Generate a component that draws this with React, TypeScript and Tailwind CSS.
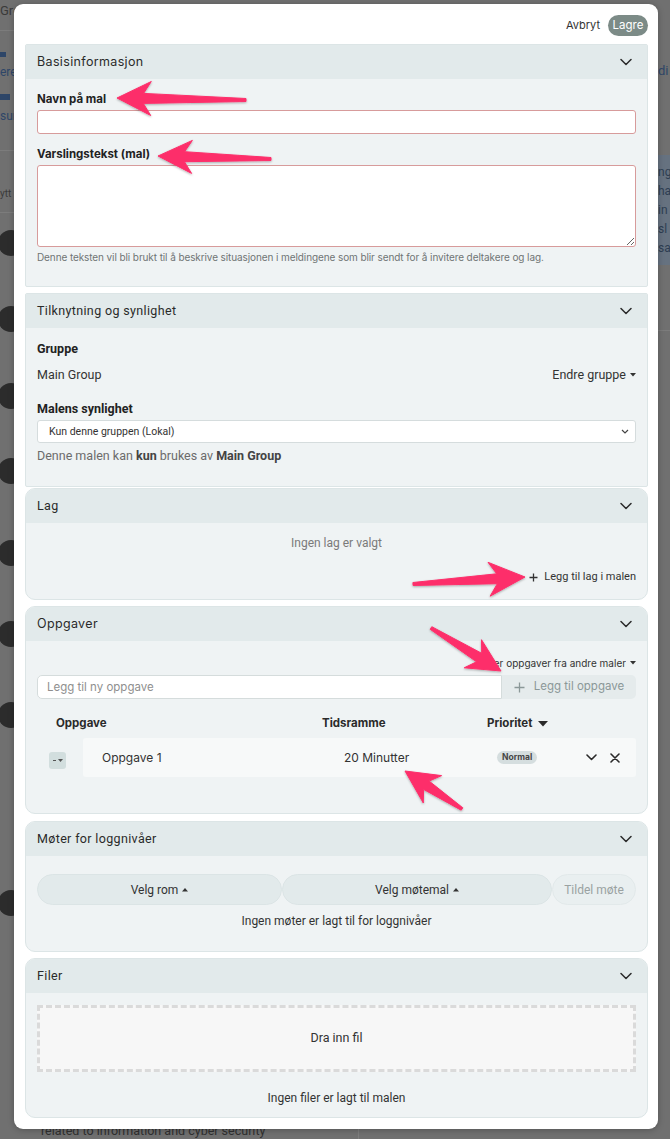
import React from "react";

const INTER = "font-['Inter',sans-serif]";
const ROBOTO = "font-['Roboto',sans-serif]";

function Chevron({ className = "" }: { className?: string }) {
  return (
    <svg width="12" height="8" viewBox="0 0 12 8" className={className}>
      <path d="M1 1.5 L6 6.5 L11 1.5" fill="none" stroke="#2b2b2b" strokeWidth="1.5" strokeLinecap="round" strokeLinejoin="round" />
    </svg>
  );
}

function CaretDown({ className = "" }: { className?: string }) {
  return (
    <svg width="6" height="4" viewBox="0 0 6 4" className={className}>
      <path d="M0 0 L6 0 L3 3.5 Z" fill="#333" />
    </svg>
  );
}

function CaretUp({ className = "" }: { className?: string }) {
  return (
    <svg width="6" height="4" viewBox="0 0 6 4" className={className}>
      <path d="M0 3.5 L6 3.5 L3 0 Z" fill="#333" />
    </svg>
  );
}

function Section({
  title,
  titleFont,
  rounded,
  className = "",
  children,
}: {
  title: string;
  titleFont: string;
  rounded: boolean;
  className?: string;
  children: React.ReactNode;
}) {
  return (
    <div
      className={`border border-[#dce5e6] bg-[#eff3f4] overflow-hidden ${rounded ? "rounded-[10px]" : "rounded-[2px]"} ${className}`}
    >
      <div className="h-[34px] bg-[#e2eaeb] flex items-center justify-between pl-[11px] pr-[15px]">
        <span className={`text-[12.5px] tracking-[0.35px] text-[#2a2a2a] ${titleFont}`}>{title}</span>
        <Chevron />
      </div>
      <div className="px-[11px]">{children}</div>
    </div>
  );
}

type P = [number, number];
function arrowPoints(tail: P, tip: P, headLen = 34, headW = 34, shaftW = 10, tailW = 3) {
  const [x1, y1] = tail;
  const [x2, y2] = tip;
  const dx = x2 - x1;
  const dy = y2 - y1;
  const L = Math.hypot(dx, dy);
  const ux = dx / L;
  const uy = dy / L;
  const nx = -uy;
  const ny = ux;
  const bx = x2 - ux * headLen;
  const by = y2 - uy * headLen;
  const jx = x2 - ux * headLen * 0.78;
  const jy = y2 - uy * headLen * 0.78;
  const pts: P[] = [
    [x1 + (nx * tailW) / 2, y1 + (ny * tailW) / 2],
    [jx + (nx * shaftW) / 2, jy + (ny * shaftW) / 2],
    [bx + (nx * headW) / 2, by + (ny * headW) / 2],
    [x2, y2],
    [bx - (nx * headW) / 2, by - (ny * headW) / 2],
    [jx - (nx * shaftW) / 2, jy - (ny * shaftW) / 2],
    [x1 - (nx * tailW) / 2, y1 - (ny * tailW) / 2],
  ];
  return pts.map((p) => `${p[0].toFixed(1)},${p[1].toFixed(1)}`).join(" ");
}

function Arrows() {
  const arrows: { tail: P; tip: P; hl?: number; hw?: number }[] = [
    { tail: [246, 100], tip: [117, 98], hl: 34, hw: 34 },
    { tail: [271, 159], tip: [158, 156], hl: 34, hw: 33 },
    { tail: [413, 584], tip: [525, 577], hl: 36, hw: 34 },
    { tail: [431, 628], tip: [501, 671], hl: 33, hw: 33 },
    { tail: [462, 809], tip: [405, 771], hl: 33, hw: 33 },
  ];
  return (
    <svg className="absolute inset-0 pointer-events-none" width="670" height="1139" viewBox="0 0 670 1139">
      <defs>
        <filter id="ash" x="-20%" y="-20%" width="140%" height="140%">
          <feDropShadow dx="0" dy="1" stdDeviation="1" floodColor="#000" floodOpacity="0.3" />
        </filter>
      </defs>
      {arrows.map((a, i) => (
        <polygon
          key={i}
          points={arrowPoints(a.tail, a.tip, a.hl, a.hw)}
          fill="#fd2f6b"
          stroke="#fd2f6b"
          strokeWidth="1"
          strokeLinejoin="round"
          filter="url(#ash)"
        />
      ))}
    </svg>
  );
}

function Backdrop() {
  const circles = [243, 319, 396, 471, 553, 634, 715, 903];
  return (
    <div className="absolute inset-0 bg-[#707070]">
      <div className={`absolute left-0 top-[1px] text-[13px] text-[#3a3a3a] ${ROBOTO}`}>Gro</div>
      <div className="absolute left-0 top-[30px] w-[14px] h-px bg-[#7c7c7c]" />
      <div className="absolute left-0 top-[52px] w-[6px] h-[5px] bg-[#2e4668]" />
      <div className={`absolute left-0 top-[63px] text-[12px] text-[#2e4668] ${ROBOTO}`}>ere</div>
      <div className="absolute left-0 top-[94px] w-[10px] h-[6px] bg-[#2e4668]" />
      <div className={`absolute left-0 top-[107px] text-[12px] text-[#2e4668] ${ROBOTO}`}>sur</div>
      <div className="absolute left-0 top-[150px] w-[14px] h-px bg-[#7c7c7c]" />
      <div className={`absolute left-0 top-[186px] text-[10px] text-[#3a3a3a] ${ROBOTO}`}>ytt</div>
      <div className="absolute left-0 top-[212px] w-[14px] h-px bg-[#7c7c7c]" />
      {circles.map((y) => (
        <div key={y} className="absolute left-[-2px] w-[26px] h-[26px] rounded-full bg-[#2c2c2c]" style={{ top: y - 13 }} />
      ))}
      <div className={`absolute left-[658px] top-[61px] text-[13px] text-[#2e4668] ${ROBOTO}`}>di</div>
      <div className="absolute left-[658px] top-[155px] w-[12px] h-[110px] bg-[#667280]" />
      <div className={`absolute left-[658px] top-[163px] text-[12px] leading-[19px] text-[#2e3e52] ${ROBOTO}`}>
        <div>ng</div>
        <div>ha</div>
        <div>in</div>
        <div>sl</div>
        <div>sa</div>
      </div>
      <div className="absolute left-[658px] top-[330px] w-[12px] h-px bg-[#7c7c7c]" />
      <div className={`absolute left-[41px] top-[1122px] text-[12.5px] text-[#2f2f2f] ${ROBOTO}`}>
        related to information and cyber security
      </div>
      <div className="absolute left-[358px] top-[1125px] w-px h-[14px] bg-[#7d7d7d]" />
    </div>
  );
}

export default function App() {
  return (
    <div className="relative w-[670px] h-[1139px] overflow-hidden">
      <Backdrop />
      <div className="relative ml-[14px] mt-[4px] w-[644px] h-[1125px] bg-white rounded-[9px] shadow-[0_1px_6px_rgba(0,0,0,0.25)] pl-[11px] pr-[10px] pt-[11px]">
        {/* top actions */}
        <div className="flex justify-end items-center h-[21px] gap-[8px]">
          <span className={`text-[11px] text-[#333] ${INTER}`}>Avbryt</span>
          <span className={`h-[21px] w-[40px] rounded-full bg-[#7c8b87] text-white text-[11.5px] flex items-center justify-center ${INTER}`}>
            Lagre
          </span>
        </div>

        <div className="mt-[8px] flex flex-col">
          {/* Basisinformasjon */}
          <Section title="Basisinformasjon" titleFont={INTER} rounded={false}>
            <div className={`pt-[12px] pb-[22px] ${INTER}`}>
              <div className="text-[11.5px] font-bold leading-[16px] text-[#222]">Navn på mal</div>
              <input className="mt-[3px] block w-full h-[24px] rounded-[3px] border border-[#d79b9b] bg-white outline-none" />
              <div className="mt-[12px] text-[11.5px] font-bold leading-[16px] text-[#222]">Varslingstekst (mal)</div>
              <textarea className="mt-[3px] block w-full h-[82px] rounded-[3px] border border-[#d79b9b] bg-white outline-none" />
              <div className="mt-[3px] text-[10px] tracking-[-0.1px] leading-[14px] text-[#6f7575]">
                Denne teksten vil bli brukt til å beskrive situasjonen i meldingene som blir sendt for å invitere deltakere og lag.
              </div>
            </div>
          </Section>

          {/* Tilknytning */}
          <Section title="Tilknytning og synlighet" titleFont={ROBOTO} rounded={false} className="mt-[6px]">
            <div className={`pt-[13px] pb-[22px] ${ROBOTO}`}>
              <div className="text-[12.5px] font-bold leading-[16px] text-[#222]">Gruppe</div>
              <div className="mt-[10px] flex justify-between items-center leading-[16px] text-[12.5px] text-[#333]">
                <span>Main Group</span>
                <span className="flex items-center gap-[4px]">
                  Endre gruppe
                  <CaretDown />
                </span>
              </div>
              <div className="mt-[18px] text-[12.5px] font-bold leading-[16px] text-[#222]">Malens synlighet</div>
              <div className="mt-[3px] h-[23px] rounded-[3px] border border-[#d5dcdd] bg-white flex items-center justify-between pl-[11px] pr-[6px]">
                <span className="text-[10.5px] text-[#333]">Kun denne gruppen (Lokal)</span>
                <svg width="8" height="5" viewBox="0 0 8 5">
                  <path d="M1 1 L4 4 L7 1" fill="none" stroke="#444" strokeWidth="1.2" />
                </svg>
              </div>
              <div className="mt-[5px] text-[12.5px] leading-[16px] text-[#6b6b6b]">
                Denne malen kan <b className="text-[#444]">kun</b> brukes av <b className="text-[#444]">Main Group</b>
              </div>
            </div>
          </Section>

          {/* Lag */}
          <Section title="Lag" titleFont={ROBOTO} rounded={true} className="mt-px">
            <div className={`pt-[12px] pb-[14px] ${ROBOTO}`}>
              <div className="text-center text-[12px] leading-[16px] text-[#7a7a7a]">Ingen lag er valgt</div>
              <div className="mt-[18px] flex justify-end items-center gap-[6px] text-[11px] leading-[16px] text-[#333]">
                <svg width="9" height="9" viewBox="0 0 9 9">
                  <path d="M4.5 0.5 V8.5 M0.5 4.5 H8.5" stroke="#333" strokeWidth="1.3" />
                </svg>
                Legg til lag i malen
              </div>
            </div>
          </Section>

          {/* Oppgaver */}
          <Section title="Oppgaver" titleFont={INTER} rounded={true} className="mt-[6px]">
            <div className={`pt-[15px] pb-[36px] ${INTER}`}>
              <div className="flex justify-end items-center gap-[4px] text-[10px] leading-[14px] text-[#333]">
                <div className="w-[136px] overflow-hidden flex justify-end whitespace-nowrap">
                  <span className="shrink-0">Importer oppgaver fra andre maler</span>
                </div>
                <CaretDown />
              </div>
              <div className="mt-[5px] flex h-[24px]">
                <input
                  placeholder="Legg til ny oppgave"
                  className="flex-1 min-w-0 h-[24px] rounded-l-[5px] border border-[#d5dcdc] bg-white pl-[9px] text-[11.5px] placeholder:text-[#8f8f8f] outline-none"
                />
                <div className="w-[134px] h-[24px] rounded-r-[5px] bg-[#e5ebec] flex items-center justify-center gap-[9px] text-[11.5px] text-[#8b9898]">
                  <svg width="11" height="11" viewBox="0 0 11 11">
                    <path d="M5.5 0.5 V10.5 M0.5 5.5 H10.5" stroke="#8b9898" strokeWidth="1.3" />
                  </svg>
                  Legg til oppgave
                </div>
              </div>
              <div className="mt-[17px] flex items-center h-[16px] text-[11.5px] font-bold text-[#2a2a2a]">
                <span className="ml-[19px] w-[266px]">Oppgave</span>
                <span className="w-[165px]">Tidsramme</span>
                <span className="flex items-center gap-[6px]">
                  Prioritet
                  <svg width="10" height="6" viewBox="0 0 10 6">
                    <path d="M0 0 L10 0 L5 5.5 Z" fill="#2a2a2a" />
                  </svg>
                </span>
              </div>
              <div className="mt-[6px] flex items-center h-[39px]">
                <div className="w-[46px] h-full flex items-center">
                  <div className="ml-[12px] mt-[6px] w-[17px] h-[17px] rounded-[3px] bg-[#d2dede] flex items-center justify-center gap-[2px]">
                    <span className="w-[3px] h-px bg-[#555]" />
                    <svg width="5" height="3" viewBox="0 0 5 3">
                      <path d="M0 0 L5 0 L2.5 3 Z" fill="#555" />
                    </svg>
                  </div>
                </div>
                <div className="flex-1 h-full rounded-[3px] bg-[#f7f9f9] flex items-center text-[12px] text-[#333] pr-[16px]">
                  <span className="w-[261px] pl-[19px]">Oppgave 1</span>
                  <span className="w-[153px]">20 Minutter</span>
                  <span className="h-[13px] px-[5px] rounded-full bg-[#d5dedf] text-[8.5px] font-bold text-[#444] flex items-center">
                    Normal
                  </span>
                  <span className="ml-auto flex items-center gap-[13px]">
                    <svg width="11" height="7" viewBox="0 0 11 7">
                      <path d="M1 1 L5.5 5.5 L10 1" fill="none" stroke="#2a2a2a" strokeWidth="1.6" strokeLinecap="round" strokeLinejoin="round" />
                    </svg>
                    <svg width="10" height="10" viewBox="0 0 10 10">
                      <path d="M1 1 L9 9 M9 1 L1 9" fill="none" stroke="#2a2a2a" strokeWidth="1.6" strokeLinecap="round" />
                    </svg>
                  </span>
                </div>
              </div>
            </div>
          </Section>

          {/* Møter */}
          <Section title="Møter for loggnivåer" titleFont={ROBOTO} rounded={true} className="mt-[7px]">
            <div className={`pt-[18px] pb-[22px] ${ROBOTO}`}>
              <div className="flex h-[31px]">
                <div className="w-[245px] h-full rounded-full border border-[#dbe4e5] bg-[#e2eaeb] flex items-center justify-center gap-[4px] text-[12px] text-[#333]">
                  Velg rom
                  <CaretUp />
                </div>
                <div className="w-[270px] h-full rounded-full border border-[#dbe4e5] bg-[#e2eaeb] flex items-center justify-center gap-[4px] text-[12px] text-[#333]">
                  Velg møtemal
                  <CaretUp />
                </div>
                <div className="flex-1 h-full rounded-full border border-[#e2e9ea] bg-[#e9eff0] flex items-center justify-center text-[12px] text-[#9aa2a2]">
                  Tildel møte
                </div>
              </div>
              <div className="mt-[8px] text-center text-[12px] leading-[16px] text-[#333]">
                Ingen møter er lagt til for loggnivåer
              </div>
            </div>
          </Section>

          {/* Filer */}
          <Section title="Filer" titleFont={ROBOTO} rounded={true} className="mt-[6px]">
            <div className={`pt-[12px] pb-[11px] ${ROBOTO}`}>
              <div className="h-[67px] border-[3px] border-dashed border-[#dadada] bg-[#f7f7f7] flex items-center justify-center text-[12.5px] text-[#333]">
                Dra inn fil
              </div>
              <div className="mt-[18px] text-center text-[12px] leading-[16px] text-[#333]">
                Ingen filer er lagt til malen
              </div>
            </div>
          </Section>
        </div>
      </div>
      <Arrows />
    </div>
  );
}
